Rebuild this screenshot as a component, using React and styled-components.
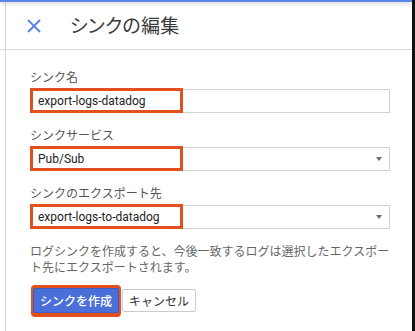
import React from "react";
import styled, { createGlobalStyle } from "styled-components";

const GlobalStyle = createGlobalStyle`
  html, body {
    margin: 0;
    padding: 0;
    background: #fff;
  }
  body {
    font-family: Roboto, "Noto Sans CJK JP", sans-serif;
    color: #333;
  }
`;

const Frame = styled.div`
  width: 415px;
  height: 331px;
  box-sizing: border-box;
  padding-left: 5px;
  border-right: 3px solid #111;
  overflow: hidden;
`;

const Panel = styled.div`
  height: 100%;
  border-left: 1px solid #d6d6d6;
`;

const TopEdge = styled.div`
  position: relative;
  z-index: 1;
  height: 2px;
  margin-left: -6px;
  background: #5a85e6;
  box-shadow: 0 1px 4px rgba(0, 0, 0, 0.28);
`;

const Header = styled.div`
  display: flex;
  align-items: center;
  height: 47px;
  margin-left: -6px;
  padding-left: 27px;
  border-bottom: 1px solid #dadada;
`;

const CloseButton = styled.button`
  display: flex;
  padding: 0;
  border: none;
  background: none;
  cursor: pointer;
`;

const Title = styled.h1`
  margin: 0 0 2px 29px;
  font-size: 19px;
  font-weight: 400;
  color: #3a3a3a;
  font-feature-settings: "palt";
  letter-spacing: 0.3px;
`;

const Form = styled.form`
  width: 360px;
  padding: 20px 0 0 24px;
`;

const Field = styled.div`
  margin-bottom: 15px;
`;

const Label = styled.label`
  display: block;
  margin-bottom: 3px;
  font-size: 12px;
  line-height: 16px;
  color: #555;
`;

const Control = styled.div`
  position: relative;
  display: flex;
  align-items: center;
  justify-content: space-between;
  height: 24px;
  box-sizing: border-box;
  padding: 0 7px;
  border: 1px solid #d3d3d3;
  font-size: 12px;
  color: #222;
`;

const Arrow = styled.span`
  width: 0;
  height: 0;
  border-left: 3.5px solid transparent;
  border-right: 3.5px solid transparent;
  border-top: 4px solid #6b6b6b;
`;

const Highlight = styled.span`
  position: absolute;
  left: -1px;
  top: -2px;
  width: 153px;
  height: calc(100% + 3px);
  box-sizing: border-box;
  border: 3px solid #e2501e;
  pointer-events: none;
`;

const Help = styled.p`
  margin: 6px 0 0;
  font-size: 12px;
  line-height: 16px;
  color: #666;
`;

const Buttons = styled.div`
  display: flex;
  align-items: center;
  gap: 3px;
  margin: 12px 0 0 3px;
`;

const Button = styled.button`
  height: ${(p) => (p.$primary ? "25px" : "23px")};
  padding: 0 6px;
  border: 1px solid ${(p) => (p.$primary ? "#3d5fc4" : "#cbcbcb")};
  border-radius: 2px;
  background: ${(p) => (p.$primary ? "#4b6fd9" : "#fff")};
  color: ${(p) => (p.$primary ? "#fff" : "#333")};
  font-family: Roboto, "Noto Sans CJK JP", sans-serif;
  font-size: 12px;
  font-weight: ${(p) => (p.$primary ? 500 : 400)};
  box-shadow: ${(p) =>
    p.$primary
      ? "0 0 0 2px #e2501e, 0 2px 0 2px #e2501e, 0 -1px 0 2px #e2501e"
      : "none"};
  cursor: pointer;
`;

const CloseIcon = () => (
  <svg width="14" height="14" viewBox="0 0 14 14">
    <path d="M1 1L13 13M13 1L1 13" stroke="#5a84e3" strokeWidth="2" fill="none" />
  </svg>
);

const fields = [
  { label: "シンク名", value: "export-logs-datadog", select: false },
  { label: "シンクサービス", value: "Pub/Sub", select: true },
  { label: "シンクのエクスポート先", value: "export-logs-to-datadog", select: true },
];

export default function App() {
  return (
    <>
      <GlobalStyle />
      <Frame>
        <Panel>
          <TopEdge />
          <Header>
            <CloseButton type="button" aria-label="閉じる">
              <CloseIcon />
            </CloseButton>
            <Title>シンクの編集</Title>
          </Header>
          <Form onSubmit={(e) => e.preventDefault()}>
            {fields.map((f) => (
              <Field key={f.label}>
                <Label>{f.label}</Label>
                <Control>
                  <span>{f.value}</span>
                  {f.select && <Arrow />}
                  <Highlight />
                </Control>
              </Field>
            ))}
            <Help>
              ログシンクを作成すると、今後一致するログは選択したエクスポート先にエクスポートされます。
            </Help>
            <Buttons>
              <Button type="submit" $primary>
                シンクを作成
              </Button>
              <Button type="button">キャンセル</Button>
            </Buttons>
          </Form>
        </Panel>
      </Frame>
    </>
  );
}
